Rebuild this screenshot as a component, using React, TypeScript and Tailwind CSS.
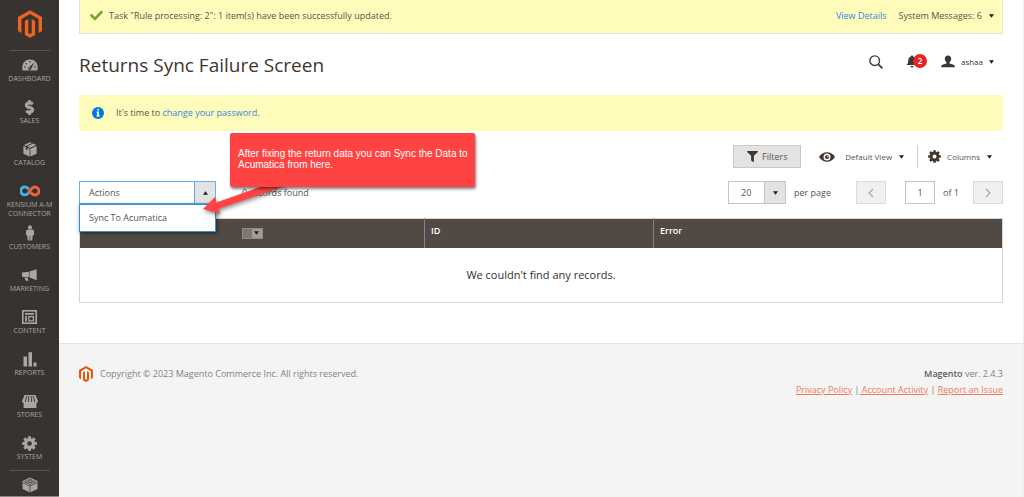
import { useState } from "react";
import type { ReactNode } from "react";
import { FaCheck, FaDollarSign, FaFilter } from "react-icons/fa";

function Caret({ up = false }: { up?: boolean }) {
  return (
    <svg viewBox="0 0 6 4" className="w-[5px] h-1 shrink-0 text-[#1f1a17]" fill="currentColor">
      <path d={up ? "M0 4h6L3 0z" : "M0 0h6L3 4z"} />
    </svg>
  );
}

function MagentoLogo({ className }: { className: string }) {
  return (
    <svg viewBox="1.6 0 20.8 24" className={className} fill="currentColor">
      <path d="M12 24l-4.455-2.572v-12l2.97-1.715v12.001l1.485.902 1.485-.902V7.713l2.971 1.715v12L12 24zM22.391 6v12l-2.969 1.714V7.713L12 3.43 4.574 7.713v12.001L1.609 18V6L12 0l10.391 6z" />
    </svg>
  );
}

function GearIcon({ className }: { className: string }) {
  return (
    <svg viewBox="-8 -8 16 16" className={className} fill="none" stroke="currentColor">
      <circle r="4.200" strokeWidth="3.400" />
      <path
        d="M0-7.800V-5M0 5v2.800M-7.800 0H-5M5 0h2.800M-5.500-5.500l2 2M3.500 3.500l2 2M-5.500 5.500l2-2M3.500-3.500l2-2"
        strokeWidth="3.200"
      />
    </svg>
  );
}

function DashboardIcon() {
  return (
    <svg viewBox="0 0 16 12" className="w-4 h-3">
      <path d="M.7 11.5C-1 5 3 .5 8 .5s9 4.500 7.300 11z" fill="currentColor" />
      <g fill="#373330">
        <circle cx="2.900" cy="8" r=".8" />
        <circle cx="4.200" cy="4.700" r=".8" />
        <circle cx="8" cy="2.800" r=".8" />
        <circle cx="13.100" cy="8" r=".8" />
        <path d="M12.300 3.500L9.300 9.500a1.600 1.600 0 1 1-2-1.500z" />
      </g>
      <circle cx="7.700" cy="9.300" r=".6" fill="currentColor" />
    </svg>
  );
}

function CatalogIcon() {
  return (
    <svg viewBox="0 0 14 15" className="w-[14px] h-[15px]" fill="currentColor">
      <path d="M6.800.3l2.200.8L3.100 3.900.9 3z M10.100 1.600L13.200 3 7 5.800 4.200 4.500z M.4 3.900l2.400 1.100v2.500l1.600.8V5.800l2.200 1v7.700L.4 11.700z M13.600 3.900v7.800l-6.200 2.800V6.800z" />
    </svg>
  );
}

function ConnectorIcon() {
  return (
    <svg viewBox="0 0 20 12" className="w-5 h-3" fill="none" strokeWidth="2.800">
      <path d="M10 6L7.800 8.600A4 4 0 1 1 8 3.500l1 1" stroke="#3fb8e8" />
      <path d="M10.800 7.500l1.200 1.200a4 4 0 1 0 0-5.400L8.500 8" stroke="#f26334" />
    </svg>
  );
}

function CustomersIcon() {
  return (
    <svg viewBox="0 0 10 16" className="w-[10px] h-4" fill="currentColor">
      <circle cx="5" cy="2.200" r="2" />
      <path d="M3 4.600h4c1.200 0 2 .8 2 2V10l-1.200.6L7.200 15.500H5.300V11h-.6v4.500H2.800l-.6-4.900L1 10V6.600c0-1.200.8-2 2-2z" />
    </svg>
  );
}

function MarketingIcon() {
  return (
    <svg viewBox="0 0 15 12" className="w-[15px] h-3" fill="currentColor">
      <path d="M14.700.2v11L7.500 8.500v-6zM0 3.500l6.900-.8v5.600L0 7.700zM2.300 8.500l3.200.3 1.200 3H3.800z" />
    </svg>
  );
}

function ContentIcon() {
  return (
    <svg viewBox="0 0 15 14" className="w-[15px] h-[14px]" fill="none" stroke="currentColor">
      <rect x=".8" y=".8" width="13.400" height="12.400" strokeWidth="1.600" />
      <path d="M3 3.800h9M4 6v5.500" strokeWidth="1.800" />
      <rect x="6.900" y="6.600" width="4.500" height="4.300" strokeWidth="1.300" />
    </svg>
  );
}

function ReportsIcon() {
  return (
    <svg viewBox="0 0 14 15" className="w-[14px] h-[15px]" fill="currentColor">
      <path d="M.5 4.500H4v10H.5zM5.500.3h3.500v14.200H5.500zM10.500 10.500h3v4h-3z" />
    </svg>
  );
}

function StoresIcon() {
  return (
    <svg viewBox="0 0 16 13" className="w-4 h-[13px]">
      <path d="M2.500 0h11L16 6.300c0 1-.7 1.700-1.600 1.700v5H1.600V8C.7 8 0 7.300 0 6.300z" fill="currentColor" />
      <path d="M4.800 1L3.200 7M6.900 1l-.6 6M9.100 1l.6 6M11.200 1l1.600 6" stroke="#373330" strokeWidth=".9" />
    </svg>
  );
}

function PartnersIcon() {
  return (
    <svg viewBox="0 0 16 16" className="w-4 h-4">
      <path d="M8 .5l7.500 3.500v8L8 15.500.5 12V4z" fill="currentColor" />
      <path d="M.5 5.500L8 9l7.500-3.500M8 9v6.500" stroke="#373330" strokeWidth=".7" fill="none" />
      <g fill="none" stroke="#373330" strokeWidth=".7">
        <ellipse cx="8" cy="3" rx="1.800" ry=".9" />
        <ellipse cx="4.500" cy="4.700" rx="1.800" ry=".9" />
        <ellipse cx="11.500" cy="4.700" rx="1.800" ry=".9" />
        <ellipse cx="8" cy="6.300" rx="1.800" ry=".9" />
      </g>
    </svg>
  );
}

const menuItems: { label: string; icon: ReactNode }[] = [
  { label: "Dashboard", icon: <DashboardIcon /> },
  { label: "Sales", icon: <FaDollarSign size={15} stroke="currentColor" strokeWidth={32} /> },
  { label: "Catalog", icon: <CatalogIcon /> },
  { label: "Kensium A-M Connector", icon: <ConnectorIcon /> },
  { label: "Customers", icon: <CustomersIcon /> },
  { label: "Marketing", icon: <MarketingIcon /> },
  { label: "Content", icon: <ContentIcon /> },
  { label: "Reports", icon: <ReportsIcon /> },
  { label: "Stores", icon: <StoresIcon /> },
  { label: "System", icon: <GearIcon className="w-[15px] h-[15px]" /> },
];

function Sidebar() {
  return (
    <aside className="w-[59px] shrink-0 h-screen overflow-hidden bg-[#373330] text-[#aaa6a0] flex flex-col items-center border-b border-[#8a8785]">
      <a href="#" aria-label="Magento Admin" className="pt-[10px] pb-3 w-10 flex justify-center border-b border-[#5a5552]">
        <MagentoLogo className="w-6 h-7 text-[#f26322]" />
      </a>
      <nav className="w-full pt-[5px] flex flex-col gap-[9px]">
        {menuItems.map((item) => (
          <a key={item.label} href="#" className="h-[33px] flex flex-col items-center">
            <span className="h-[18px] shrink-0 flex items-center">{item.icon}</span>
            <span className="text-[7px] leading-[9px] uppercase text-center px-1">{item.label}</span>
          </a>
        ))}
      </nav>
      <a href="#" aria-label="Find Partners & Extensions" className="mt-[3px] pt-[6px] w-10 flex justify-center border-t border-[#5a5552]">
        <PartnersIcon />
      </a>
    </aside>
  );
}

function SystemMessages() {
  return (
    <div className="h-[34px] pl-[10px] pr-2 pb-[2px] flex items-center bg-[#fffbbb] border border-t-0 border-[#e3e3e3]">
      <FaCheck size={13} className="text-[#79a22e]" />
      <p className="ml-[6px]">Task "Rule processing: 2": 1 item(s) have been successfully updated.</p>
      <a href="#" className="ml-auto text-[#2f8bd8]">View Details</a>
      <button className="ml-3 flex items-center gap-[7px]">
        System Messages: 6 <Caret />
      </button>
    </div>
  );
}

function PageHeader() {
  return (
    <header className="h-[61px] pr-[9px] flex items-center">
      <h1 className="text-[19px] leading-6 text-[#41362f]">Returns Sync Failure Screen</h1>
      <div className="ml-auto pb-[6px] flex items-center text-[#41362f]">
        <button aria-label="Search">
          <svg viewBox="0 0 14 14" className="w-[14px] h-[14px]" fill="none" stroke="currentColor" strokeWidth="1.400">
            <circle cx="5.700" cy="5.700" r="4.800" />
            <path d="M9.200 9.200l4.200 4.200" strokeWidth="1.800" />
          </svg>
        </button>
        <button aria-label="Notifications" className="relative ml-[23px] w-[21px] h-[14px] flex items-center">
          <svg viewBox="0 0 12 13" className="w-3 h-[13px]" fill="currentColor">
            <path d="M6 .5c.8 0 1.100.5 1.200 1C9 2.200 9.800 3.600 9.800 6c0 2 .7 3 1.900 4H.3c1.200-1 1.900-2 1.900-4 0-2.400.8-3.800 2.600-4.500.1-.5.400-1 1.200-1zM4.500 11h3c0 .8-.6 1.500-1.500 1.500S4.500 11.800 4.500 11z" />
          </svg>
          <span className="absolute left-[7px] -top-px w-[14px] h-[14px] rounded-full bg-[#e22626] text-white text-[8px] leading-[14px] font-semibold text-center">
            2
          </span>
        </button>
        <button className="ml-[14px] flex items-center gap-[6px] text-[8px]">
          <svg viewBox="0 0 14 13" className="w-[14px] h-[13px]" fill="currentColor">
            <path d="M7 .4c2.100 0 3.200 1.300 3.200 3.200C10.200 5.200 9.500 6.500 8.600 7v1.400l4 1.300c.8.3 1.200.9 1.200 1.700v.9H.2v-.9c0-.8.400-1.400 1.200-1.700l4-1.300V7c-.9-.5-1.600-1.800-1.600-3.400C3.800 1.700 4.900.4 7 .4z" />
          </svg>
          ashaa <Caret />
        </button>
      </div>
    </header>
  );
}

function PasswordNotice() {
  return (
    <div className="h-9 pl-[13px] flex items-center bg-[#fffbbb]">
      <svg viewBox="0 0 12 12" className="w-3 h-3">
        <circle cx="6" cy="6" r="6" fill="#007bdb" />
        <path d="M5.300 2h1.700v1.600H5.300zM4.500 4.600H7v3.900h.8v1.100H4.300V8.500h.9V5.700h-.7z" fill="#fff" />
      </svg>
      <p className="ml-3">
        It's time to <a href="#" className="text-[#2f8bd8]">change your password</a>.
      </p>
    </div>
  );
}

function GridControls() {
  return (
    <div className="mt-[14px] flex justify-end items-center text-[8px]">
      <button className="w-[68px] h-[23px] flex items-center justify-center gap-1 bg-[#e3e3e3] border border-[#c8c8c8] text-[9px]">
        <FaFilter size={11} className="text-[#41362f]" /> Filters
      </button>
      <button className="ml-[18px] flex items-center">
        <svg viewBox="0 0 16 10" className="w-4 h-[10px] mr-[10px] text-[#41362f]">
          <path d="M0 5C2 1.800 4.800.3 8 .3S14 1.800 16 5c-2 3.200-4.800 4.700-8 4.700S2 8.200 0 5z" fill="currentColor" />
          <circle cx="8" cy="5" r="3.500" fill="#fff" />
          <circle cx="8" cy="5" r="2.100" fill="currentColor" />
          <circle cx="8.600" cy="4.400" r=".7" fill="#fff" />
        </svg>
        <span className="mr-[7px]">Default View</span>
        <Caret />
      </button>
      <button className="ml-[13px] h-[23px] pl-[10px] pr-[11px] flex items-center border-l border-[#cccccc]">
        <GearIcon className="w-[13px] h-[13px] mr-[6px] text-[#41362f]" />
        <span className="mr-[7px]">Columns</span>
        <Caret />
      </button>
    </div>
  );
}

function ActionsMenu() {
  const [open, setOpen] = useState(true);

  return (
    <div className="relative w-[137px]">
      <button
        onClick={() => setOpen(!open)}
        aria-expanded={open}
        className="w-full h-[23px] flex items-stretch border border-[#007bdb]/60 bg-white"
      >
        <span className="flex-1 pl-[9px] flex items-center">Actions</span>
        <span className="w-[21px] flex items-center justify-center bg-[#e3e3e3] border-l border-[#007bdb]/60">
          <Caret up={open} />
        </span>
      </button>
      {open && (
        <ul className="absolute z-10 top-[23px] left-0 w-full bg-white border border-[#3a8fd0] shadow-[1px_1px_4px_rgba(0,0,0,0.5)]">
          <li>
            <button className="w-full h-[26px] pl-[9px] text-left">Sync To Acumatica</button>
          </li>
        </ul>
      )}
    </div>
  );
}

function PageArrow({ label, path }: { label: string; path: string }) {
  return (
    <button
      aria-label={label}
      disabled
      className="w-[30px] h-[23px] flex items-center justify-center bg-[#f0f0f0] border border-[#dcdcdc] text-[#a8a6a4]"
    >
      <svg viewBox="0 0 6 10" className="w-[6px] h-[10px]" fill="none" stroke="currentColor" strokeWidth="1.200">
        <path d={path} />
      </svg>
    </button>
  );
}

function Pager() {
  return (
    <div className="ml-auto flex items-center">
      <label className="flex items-center gap-2">
        <span className="relative flex">
          <select className="appearance-none w-[58px] h-[23px] pl-3 border border-[#c4c4c4] bg-white" defaultValue="20">
            <option>20</option>
            <option>50</option>
            <option>100</option>
          </select>
          <span className="absolute inset-y-0 right-0 w-[22px] flex items-center justify-center bg-[#e3e3e3] border border-[#c4c4c4] pointer-events-none">
            <Caret />
          </span>
        </span>
        per page
      </label>
      <div className="ml-[25px] flex items-center">
        <PageArrow label="Previous page" path="M5 1L1 5l4 4" />
        <label className="ml-[19px] mr-[14px] flex items-center gap-2">
          <input
            type="text"
            defaultValue="1"
            aria-label="Page"
            className="w-[30px] h-[23px] border border-[#c4c4c4] bg-white text-center"
          />
          of 1
        </label>
        <PageArrow label="Next page" path="M1 1l4 4-4 4" />
      </div>
    </div>
  );
}

function Callout() {
  return (
    <div className="absolute z-20 left-[151px] -top-12 w-[245px] h-[54px] pointer-events-none">
      <svg
        viewBox="0 0 110 40"
        className="absolute -left-7 top-[46px] w-[110px] h-10 drop-shadow-[1px_2px_2px_rgba(0,0,0,0.45)]"
        fill="#ff4343"
      >
        <path d="M1 30L13 18l1.500 5.500L58 8l8-3h20l-6 3L16 30l2 5z" />
      </svg>
      <p className="relative h-full pl-2 pr-1 pt-[15px] rounded-[2px] bg-[#ff4343] text-white text-[10px] leading-[11px] font-['Liberation_Sans',Arial,sans-serif] shadow-[1px_2px_3px_rgba(0,0,0,0.5)]">
        After fixing the return data you can Sync the Data to Acumatica from here.
      </p>
    </div>
  );
}

function RecordsTable() {
  return (
    <table className="mt-[14px] w-full table-fixed border border-[#d6d6d6] border-collapse">
      <thead>
        <tr className="h-[29px] bg-[#514943] text-white text-left text-[9px]">
          <th className="w-[345px] border-r border-[#8a837f]">
            <button aria-label="Select rows" className="mx-auto w-[21px] h-[11px] flex bg-[#7d7672] border border-[#8f8985]">
              <span className="ml-auto w-[10px] h-full flex items-center justify-center bg-[#a09b98]">
                <Caret />
              </span>
            </button>
          </th>
          <th className="w-[229px] pl-[6px] pb-1 font-semibold border-r border-[#8a837f]">ID</th>
          <th className="pl-[6px] pb-1 font-semibold">Error</th>
        </tr>
      </thead>
      <tbody>
        <tr className="h-[55px]">
          <td colSpan={3} className="text-center text-[11px] text-[#303030]">
            We couldn't find any records.
          </td>
        </tr>
      </tbody>
    </table>
  );
}

function Footer() {
  return (
    <footer className="flex-1 px-5 pt-[22px] flex justify-between items-start bg-[#f4f4f4] border-t border-[#e3e3e3] text-[#828282]">
      <p className="flex items-center gap-[7px]">
        <MagentoLogo className="w-[14px] h-4 text-[#eb5202]" />
        Copyright © 2023 Magento Commerce Inc. All rights reserved.
      </p>
      <div className="text-right leading-4">
        <p>
          <strong className="font-semibold text-[#5a5a5a]">Magento</strong> ver. 2.4.3
        </p>
        <p>
          <a href="#" className="text-[#ef7b5b] underline">Privacy Policy</a> |
          <a href="#" className="text-[#ef7b5b] underline whitespace-pre"> Account Activity</a> |{" "}
          <a href="#" className="text-[#ef7b5b] underline">Report an Issue</a>
        </p>
      </div>
    </footer>
  );
}

export default function App() {
  return (
    <div className="flex min-h-screen bg-white font-['Open_Sans','Noto_Sans',sans-serif] text-[9px] leading-4 text-[#5a534e]">
      <Sidebar />
      <div className="flex-1 min-w-0 flex flex-col border-r border-[#efefef]">
        <main className="px-5 pb-10">
          <SystemMessages />
          <PageHeader />
          <PasswordNotice />
          <GridControls />
          <div className="relative mt-[13px] flex items-center">
            <ActionsMenu />
            <p className="ml-[26px]">0 records found</p>
            <Pager />
            <Callout />
          </div>
          <RecordsTable />
        </main>
        <Footer />
      </div>
    </div>
  );
}
